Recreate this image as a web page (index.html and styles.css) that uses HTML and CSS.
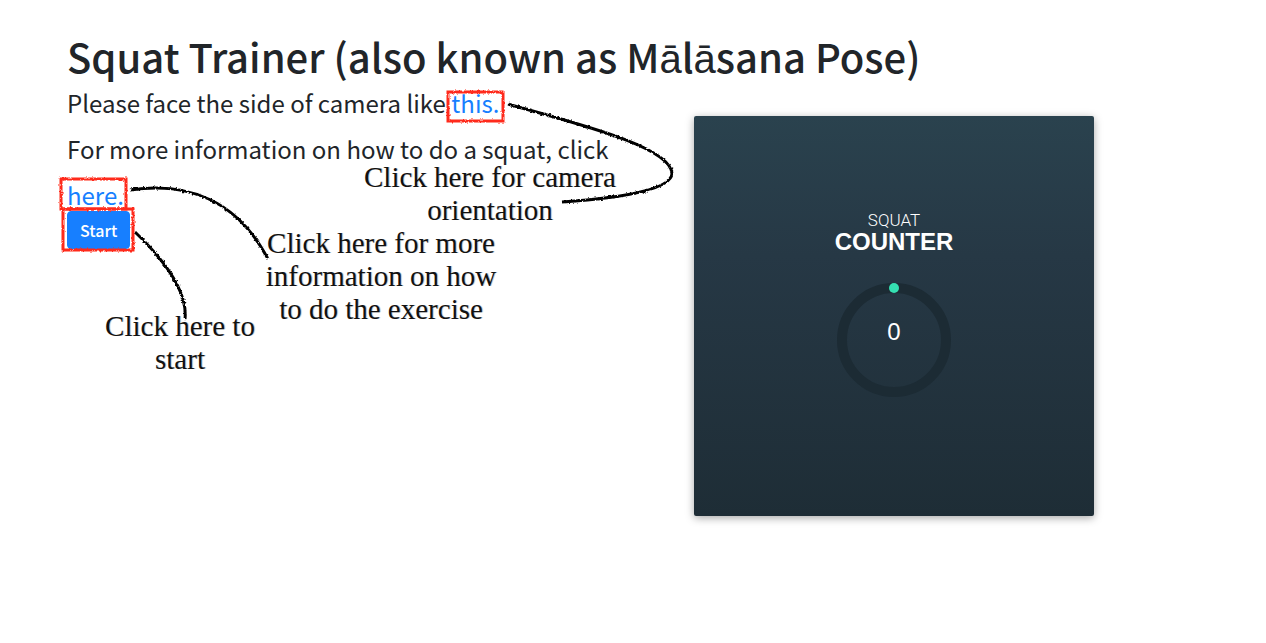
FILE: index.html
```html
<!DOCTYPE html>
<html lang="en">
<head>
<meta charset="utf-8">
<title>Squat Trainer</title>
<link rel="stylesheet" href="styles.css">
</head>
<body>
<main class="page">
  <h1 class="title">Squat Trainer (also known as M<span class="accented">ā</span>l<span class="accented">ā</span>sana Pose)</h1>
  <div class="columns">
    <section class="intro">
      <p class="lead">Please face the side of camera like <a class="link" href="#orientation">this.</a></p>
      <p class="lead">For more information on how to do a squat, click <a class="link" href="#howto">here.</a></p>
      <button class="start" type="button">Start</button>
    </section>
    <section class="counter">
      <h2 class="counter-title"><span class="counter-kicker">SQUAT</span>COUNTER</h2>
      <div class="dial">
        <svg class="dial-ring" viewBox="0 0 114 114" aria-hidden="true">
          <circle cx="57" cy="57" r="52" fill="none" stroke="#1c2b34" stroke-width="10"/>
          <circle cx="57" cy="5" r="5" fill="#35e0b2"/>
        </svg>
        <output class="dial-value">0</output>
      </div>
    </section>
  </div>
</main>
<svg class="strokes" width="700" height="400" viewBox="0 0 700 400" aria-hidden="true">
  <defs>
    <filter id="rough" filterUnits="userSpaceOnUse" x="0" y="0" width="700" height="400">
      <feTurbulence type="fractalNoise" baseFrequency="0.4" numOctaves="2" seed="4" result="n"/>
      <feDisplacementMap in="SourceGraphic" in2="n" scale="3" xChannelSelector="R" yChannelSelector="G"/>
    </filter>
  </defs>
  <g fill="none" filter="url(#rough)">
    <g stroke="#ff2a1a" stroke-width="3">
      <rect x="448" y="92" width="55" height="29"/>
      <rect x="61" y="179" width="65" height="30"/>
      <rect x="63" y="209" width="70" height="41"/>
    </g>
    <g stroke="#000" stroke-width="3">
      <path d="M508 104C570 122 672 146 672 174C670 190 620 198 562 202"/>
      <path d="M130 190C190 181 238 202 268 259"/>
      <path d="M135 232C160 256 188 290 185 319"/>
    </g>
  </g>
</svg>
<p class="note note-camera">Click here for camera orientation</p>
<p class="note note-info">Click here for more information on how to do the exercise</p>
<p class="note note-start">Click here to start</p>
</body>
</html>
```
FILE: styles.css
```css
* { box-sizing: border-box; }
body {
  margin: 0;
  position: relative;
  background: #fff;
  color: #212529;
  font-family: "Noto Sans CJK SC", "Open Sans", sans-serif;
}
.page { padding: 35px 102px 32px 67px; }
.title {
  margin: 0;
  font-size: 40px;
  font-weight: 500;
  line-height: 42px;
}
.accented { font-family: "Liberation Sans", sans-serif; }
.columns {
  display: grid;
  grid-template-columns: minmax(0, 557px) minmax(400px, 1fr);
}
.lead {
  margin: 0;
  font-size: 24px;
  line-height: 46px;
}
.link { color: #177fff; text-decoration: none; }
.intro { display: flex; flex-direction: column; align-items: flex-start; }
.start {
  margin-top: -7px;
  padding: 6px 12px;
  border: 1px solid #177fff;
  border-radius: 4px;
  background: #177fff;
  color: #fff;
  font: 500 16px/24px "Noto Sans CJK SC", sans-serif;
}
.counter {
  justify-self: center;
  width: 400px;
  min-height: 400px;
  margin-top: 36px;
  padding-top: 94px;
  display: flex;
  flex-direction: column;
  align-items: center;
  border-radius: 2px;
  background: linear-gradient(#2a424e, #263845 35%, #1e2d36);
  box-shadow: 0 2px 8px rgba(0, 0, 0, .35);
  color: #fff;
  font-family: "Liberation Sans", sans-serif;
}
.counter-title {
  margin: 0;
  font-size: 24px;
  line-height: 24px;
  text-align: center;
}
.counter-kicker {
  display: block;
  font: 300 17px/20px Roboto, sans-serif;
}
.dial { display: grid; margin-top: 29px; }
.dial-ring, .dial-value { grid-area: 1 / 1; }
.dial-ring { width: 114px; height: 114px; }
.dial-value { justify-self: center; padding-top: 36px; font-size: 24px; line-height: 26px; }
.strokes { position: absolute; left: 0; top: 0; pointer-events: none; }
.note {
  position: absolute;
  margin: 0;
  color: #111;
  font: 29px/33px "Liberation Serif", serif;
  text-align: center;
  text-shadow: 1px 0 0 #ccc;
}
.note-camera { left: 350px; top: 161px; width: 280px; }
.note-info { left: 256px; top: 227px; width: 250px; }
.note-start { left: 100px; top: 310px; width: 160px; }
```
